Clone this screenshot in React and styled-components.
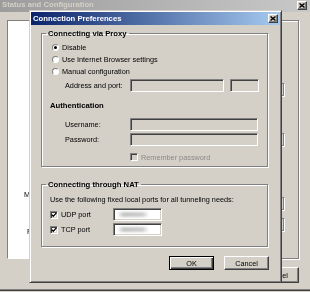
import React from 'react';
import styled, { createGlobalStyle } from 'styled-components';

const face = '#d4d0c8';
const shadow = '#808080';
const dark = '#404040';

const GlobalStyle = createGlobalStyle`
  html, body {
    margin: 0;
    padding: 0;
    background: ${face};
    overflow: hidden;
  }
  body {
    font-family: "Liberation Sans", Arial, sans-serif;
    font-size: 7.3px;
    color: #000;
  }
  * { box-sizing: border-box; }
`;

const Screen = styled.div`
  position: relative;
  width: 310px;
  height: 292px;
  overflow: hidden;
  background: ${face};
  will-change: transform;
`;

/* ---------- window behind ---------- */

const BgWindow = styled.div`
  display: flex;
  flex-direction: column;
  height: 291px;
  border-bottom: 1px solid ${dark};
  box-shadow: inset 0 -1px 0 ${shadow};
`;

const BgTitleBar = styled.div`
  display: flex;
  align-items: center;
  justify-content: space-between;
  height: 13px;
  padding: 0 3px 1px 2px;
  background: linear-gradient(90deg, #9c9c9c, #c8c8c8);
  border-bottom: 1px solid ${face};
`;

const BgTitle = styled.span`
  font-weight: bold;
  font-size: 7.7px;
  color: ${face};
  margin-top: -2px;
`;

const CloseButton = styled.span`
  display: flex;
  align-items: center;
  justify-content: center;
  width: 10px;
  height: 9px;
  background: ${face};
  border: 1px solid;
  border-color: #fff ${dark} ${dark} #fff;
  box-shadow: inset -1px -1px 0 ${shadow};
`;

const BgBody = styled.div`
  flex: 1;
  display: flex;
  flex-direction: column;
  gap: 8px;
  padding: 7px 11px 7px 7px;
`;

const BgMain = styled.div`
  display: flex;
  height: 239px;
`;

const ListPanel = styled.div`
  display: flex;
  flex-direction: column;
  width: 93px;
  background: #fff;
  border: 1px solid;
  border-color: ${shadow} #fff #fff ${shadow};
`;

const ListLabel = styled.span`
  line-height: 9px;
  margin-top: ${({ $top }) => $top}px;
  padding-left: ${({ $indent }) => $indent}px;
`;

const BgGroup = styled.div`
  flex: 1;
  display: flex;
  flex-direction: column;
  align-items: flex-end;
  margin-left: 8px;
  padding-right: 13px;
  border: 1px solid ${shadow};
  box-shadow: 1px 1px 0 #fff, inset 1px 1px 0 #fff;
`;

const BgEdit = styled.span`
  width: 80px;
  height: 14px;
  margin-top: ${({ $top }) => $top}px;
  background: ${face};
  border: 1px solid;
  border-color: ${shadow} #fff #fff ${shadow};
  box-shadow: inset -1px -1px 0 ${shadow};
`;

const BgButtonRow = styled.div`
  display: flex;
  justify-content: flex-end;
  gap: 5px;
`;

const Button = styled.button`
  display: flex;
  align-items: center;
  justify-content: center;
  width: 45px;
  height: ${({ $tall }) => ($tall ? 16 : 14)}px;
  padding: 0;
  font: inherit;
  color: #000;
  background: ${face};
  border: 1px solid;
  border-color: ${({ $primary }) => ($primary ? '#000' : `#fff ${dark} ${dark} #fff`)};
  box-shadow: ${({ $primary }) =>
    $primary
      ? `inset 1px 1px 0 #fff, inset -1px -1px 0 ${dark}, inset -2px -2px 0 ${shadow}`
      : `inset -1px -1px 0 ${shadow}`};
`;

/* ---------- dialog ---------- */

const Dialog = styled.div`
  position: absolute;
  left: 29px;
  top: 10px;
  width: 253px;
  height: 273px;
  display: flex;
  flex-direction: column;
  padding: 1px;
  background: ${face};
  border: 1px solid;
  border-color: ${face} ${dark} ${dark} ${face};
  box-shadow: inset 1px 1px 0 #fff, inset -1px -1px 0 ${shadow};
`;

const TitleBar = styled.div`
  display: flex;
  align-items: center;
  justify-content: space-between;
  height: 13px;
  padding: 0 2px 0 2px;
  background: linear-gradient(90deg, #0a246a, #a6caf0);
`;

const TitleText = styled.span`
  font-weight: bold;
  font-size: 7.7px;
  color: #fff;
`;

const DialogBody = styled.div`
  display: flex;
  flex-direction: column;
  padding: 4px 12px 0 10px;
`;

const Group = styled.fieldset`
  margin: ${({ $top }) => $top || 0}px 0 0 0;
  padding: 3px 0 ${({ $pb }) => $pb}px 4px;
  min-width: 0;
  border: 1px solid ${shadow};
  box-shadow: 1px 1px 0 #fff, inset 1px 1px 0 #fff;
`;

const Legend = styled.legend`
  padding: 0 2px;
  line-height: 9px;
  font-weight: bold;
  font-size: 7.7px;
`;

const GroupContent = styled.div`
  display: flex;
  flex-direction: column;
  padding-left: 4px;
`;

const RadioRow = styled.label`
  display: flex;
  align-items: center;
  gap: 3px;
  height: 12px;
  margin-left: 2px;
`;

const Radio = styled.span`
  display: flex;
  align-items: center;
  justify-content: center;
  width: 7px;
  height: 7px;
  border-radius: 50%;
  background: #fff;
  border: 1px solid;
  border-color: ${shadow} #fff #fff ${shadow};
  box-shadow: 0 0 0 0.5px ${face};

  &::after {
    content: '';
    display: ${({ $checked }) => ($checked ? 'block' : 'none')};
    width: 3px;
    height: 3px;
    border-radius: 50%;
    background: #000;
  }
`;

const FieldRow = styled.div`
  display: flex;
  align-items: center;
  height: 13px;
  margin-top: ${({ $top }) => $top}px;
  padding-left: 15px;
`;

const FieldLabel = styled.span`
  width: 65px;
  flex-shrink: 0;
`;

const Edit = styled.span`
  display: flex;
  align-items: center;
  width: ${({ $width }) => $width}px;
  height: 13px;
  margin-left: ${({ $gap }) => $gap || 0}px;
  padding-left: 3px;
  background: ${({ $disabled }) => ($disabled ? face : '#fff')};
  border: 1px solid;
  border-color: ${shadow} #fff #fff ${shadow};
  box-shadow: inset 1px 1px 0 ${dark}, inset -1px -1px 0 ${face};
`;

const PortMask = styled.span`
  width: 32px;
  height: 5px;
  background: linear-gradient(90deg, rgba(190, 190, 190, 0), #c4c4c4 20%, #cdcdcd 80%, rgba(190, 190, 190, 0));
  filter: blur(0.8px);
`;

const SectionTitle = styled.div`
  margin-top: 9px;
  line-height: 10px;
  font-weight: bold;
  font-size: 7.7px;
`;

const CheckRow = styled.label`
  display: flex;
  align-items: center;
  gap: 3px;
  height: ${({ $height }) => $height}px;
  margin-top: ${({ $top }) => $top}px;
  padding-left: ${({ $indent }) => $indent || 0}px;
  color: ${({ $disabled }) => ($disabled ? '#8c8a86' : '#000')};
`;

const CheckLabel = styled.span`
  width: ${({ $width }) => ($width ? `${$width}px` : 'auto')};
`;

const CheckBox = styled.span`
  display: flex;
  align-items: center;
  justify-content: center;
  flex-shrink: 0;
  width: 8px;
  height: 8px;
  background: ${({ $disabled }) => ($disabled ? face : '#fff')};
  border: 1px solid;
  border-color: ${shadow} #fff #fff ${shadow};
  box-shadow: inset 1px 1px 0 ${dark}, inset -1px -1px 0 ${face};
`;

const TextRow = styled.div`
  margin-top: 3px;
  line-height: 10px;
`;

const ButtonRow = styled.div`
  display: flex;
  justify-content: flex-end;
  gap: 10px;
  margin: 9px -1px 0 0;
`;

const CloseGlyph = () => (
  <svg width="6" height="5" viewBox="0 0 6 5">
    <path d="M0.5 0.5 L5.5 4.5 M5.5 0.5 L0.5 4.5" stroke="#000" strokeWidth="1.4" />
  </svg>
);

const CheckGlyph = () => (
  <svg width="6" height="6" viewBox="0 0 6 6">
    <polyline points="0.7,2.6 2.3,4.3 5.4,0.9" fill="none" stroke="#000" strokeWidth="1.3" />
  </svg>
);

const bgEdits = [62, 36, 50, 7];

export default function App() {
  return (
    <Screen>
      <GlobalStyle />
      <BgWindow>
        <BgTitleBar>
          <BgTitle>Status and Configuration</BgTitle>
          <CloseButton><CloseGlyph /></CloseButton>
        </BgTitleBar>
        <BgBody>
          <BgMain>
            <ListPanel>
              <ListLabel $top={169} $indent={16}>Mode:</ListLabel>
              <ListLabel $top={28} $indent={19}>Port:</ListLabel>
            </ListPanel>
            <BgGroup>
              {bgEdits.map((top, i) => (
                <BgEdit key={i} $top={top} />
              ))}
            </BgGroup>
          </BgMain>
          <BgButtonRow>
            <Button $tall>OK</Button>
            <Button $tall>Cancel</Button>
          </BgButtonRow>
        </BgBody>
      </BgWindow>

      <Dialog>
        <TitleBar>
          <TitleText>Connection Preferences</TitleText>
          <CloseButton><CloseGlyph /></CloseButton>
        </TitleBar>
        <DialogBody>
          <Group $pb={4}>
            <Legend>Connecting via Proxy</Legend>
            <GroupContent>
              <RadioRow><Radio $checked />Disable</RadioRow>
              <RadioRow><Radio />Use Internet Browser settings</RadioRow>
              <RadioRow><Radio />Manual configuration</RadioRow>
              <FieldRow $top={2}>
                <FieldLabel>Address and port:</FieldLabel>
                <Edit $width={94} $disabled />
                <Edit $width={29} $gap={6} $disabled />
              </FieldRow>
              <SectionTitle>Authentication</SectionTitle>
              <FieldRow $top={7}>
                <FieldLabel>Username:</FieldLabel>
                <Edit $width={128} $disabled />
              </FieldRow>
              <FieldRow $top={2}>
                <FieldLabel>Password:</FieldLabel>
                <Edit $width={128} $disabled />
              </FieldRow>
              <CheckRow $top={6} $height={10} $indent={80} $disabled>
                <CheckBox $disabled />
                <CheckLabel>Remember password</CheckLabel>
              </CheckRow>
            </GroupContent>
          </Group>

          <Group $top={13} $pb={10}>
            <Legend>Connecting through NAT</Legend>
            <GroupContent>
              <TextRow>Use the following fixed local ports for all tunneling needs:</TextRow>
              <CheckRow $top={3} $height={13}>
                <CheckBox><CheckGlyph /></CheckBox>
                <CheckLabel $width={49}>UDP port</CheckLabel>
                <Edit $width={49}><PortMask /></Edit>
              </CheckRow>
              <CheckRow $top={2} $height={13}>
                <CheckBox><CheckGlyph /></CheckBox>
                <CheckLabel $width={49}>TCP port</CheckLabel>
                <Edit $width={49}><PortMask /></Edit>
              </CheckRow>
            </GroupContent>
          </Group>

          <ButtonRow>
            <Button $primary>OK</Button>
            <Button>Cancel</Button>
          </ButtonRow>
        </DialogBody>
      </Dialog>
    </Screen>
  );
}
